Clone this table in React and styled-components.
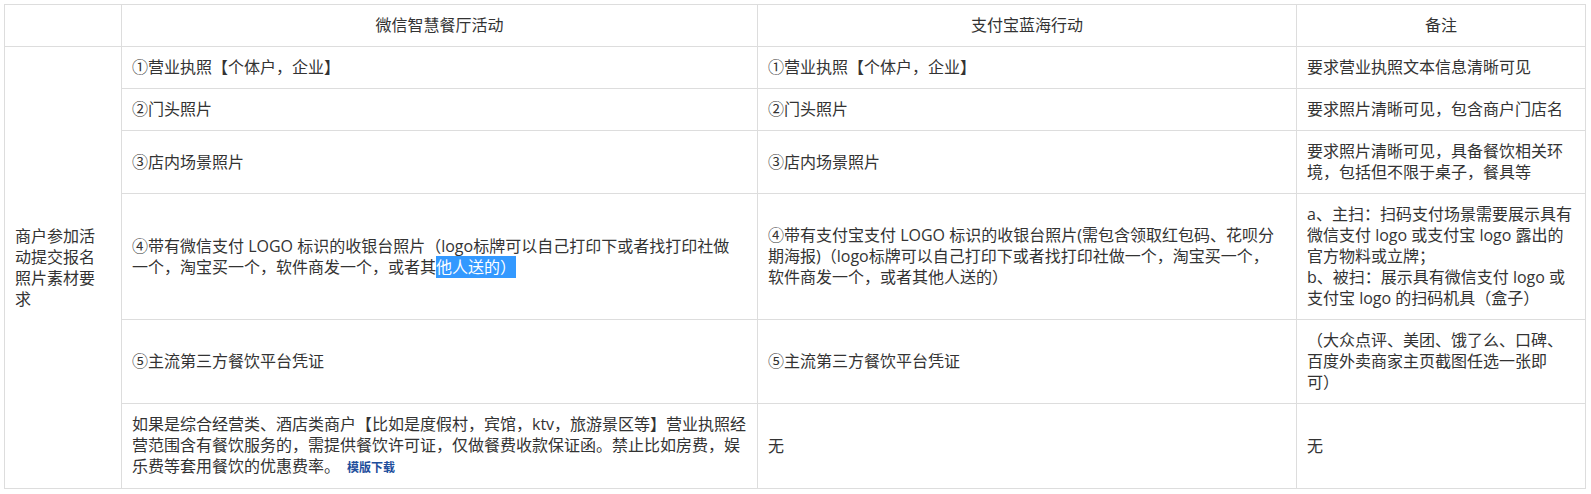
import styled, { createGlobalStyle } from "styled-components";

/**
 * styles
 */
const GlobalStyle = createGlobalStyle`
  body {
    margin: 0;
    background: #fff;
    font-family: "Open Sans", "Noto Sans CJK SC", sans-serif;
    color: #333;
  }
`;

const Page = styled.div`
  padding: 4px;
`;

const Table = styled.table`
  width: 1582px;
  border-collapse: collapse;
  table-layout: fixed;
  font-size: 16px;
  line-height: 21px;
`;

const HeadCell = styled.th`
  border: 1px solid #ddd;
  padding: 10px;
  font-weight: normal;
  text-align: center;
  color: #333;
`;

const Cell = styled.td`
  border: 1px solid #ddd;
  padding: 10px;
  vertical-align: middle;
  text-align: left;
  white-space: nowrap;
`;

const Selected = styled.span`
  background: #3399ff;
  color: #fff;
`;

const Download = styled.a`
  margin-left: 7px;
  font-size: 12px;
  font-weight: bold;
  color: #1e4e9c;
  text-decoration: none;
`;

// lines are broken where the reference breaks them
const Lines = ({ lines }) =>
  lines.map((line, i) => (
    <span key={i}>
      {i > 0 && <br />}
      {line}
    </span>
  ));

const rows = [
  {
    wx: ["①营业执照【个体户，企业】"],
    ali: ["①营业执照【个体户，企业】"],
    note: ["要求营业执照文本信息清晰可见"],
  },
  {
    wx: ["②门头照片"],
    ali: ["②门头照片"],
    note: ["要求照片清晰可见，包含商户门店名"],
  },
  {
    wx: ["③店内场景照片"],
    ali: ["③店内场景照片"],
    note: ["要求照片清晰可见，具备餐饮相关环", "境，包括但不限于桌子，餐具等"],
  },
  {
    wx: [
      "④带有微信支付 LOGO 标识的收银台照片（logo标牌可以自己打印下或者找打印社做",
      <>
        一个，淘宝买一个，软件商发一个，或者其<Selected>他人送的）</Selected>
      </>,
    ],
    ali: [
      "④带有支付宝支付 LOGO 标识的收银台照片(需包含领取红包码、花呗分",
      "期海报)（logo标牌可以自己打印下或者找打印社做一个，淘宝买一个，",
      "软件商发一个，或者其他人送的）",
    ],
    note: [
      "a、主扫：扫码支付场景需要展示具有",
      "微信支付 logo 或支付宝 logo 露出的",
      "官方物料或立牌；",
      "b、被扫：展示具有微信支付 logo 或",
      "支付宝 logo 的扫码机具（盒子）",
    ],
  },
  {
    wx: ["⑤主流第三方餐饮平台凭证"],
    ali: ["⑤主流第三方餐饮平台凭证"],
    note: [
      "（大众点评、美团、饿了么、口碑、",
      "百度外卖商家主页截图任选一张即",
      "可）",
    ],
  },
  {
    wx: [
      "如果是综合经营类、酒店类商户【比如是度假村，宾馆，ktv，旅游景区等】营业执照经",
      "营范围含有餐饮服务的，需提供餐饮许可证，仅做餐费收款保证函。禁止比如房费，娱",
      <>
        乐费等套用餐饮的优惠费率。<Download href="#">模版下载</Download>
      </>,
    ],
    ali: ["无"],
    note: ["无"],
  },
];

const App = () => {
  return (
    <Page>
      <GlobalStyle />
      <Table>
        <colgroup>
          <col style={{ width: 117 }} />
          <col style={{ width: 636 }} />
          <col style={{ width: 539 }} />
          <col style={{ width: 289 }} />
        </colgroup>
        <thead>
          <tr>
            <HeadCell />
            <HeadCell>微信智慧餐厅活动</HeadCell>
            <HeadCell>支付宝蓝海行动</HeadCell>
            <HeadCell>备注</HeadCell>
          </tr>
        </thead>
        <tbody>
          {rows.map((row, i) => (
            <tr key={i}>
              {i === 0 && (
                <Cell rowSpan={rows.length}>
                  <Lines lines={["商户参加活", "动提交报名", "照片素材要", "求"]} />
                </Cell>
              )}
              <Cell>
                <Lines lines={row.wx} />
              </Cell>
              <Cell>
                <Lines lines={row.ali} />
              </Cell>
              <Cell>
                <Lines lines={row.note} />
              </Cell>
            </tr>
          ))}
        </tbody>
      </Table>
    </Page>
  );
};

export default App;
